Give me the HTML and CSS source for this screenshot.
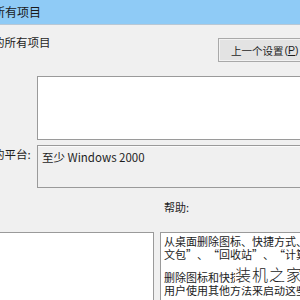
FILE: index.html
```html
<!DOCTYPE html>
<html lang="zh-Hans">
<head>
<meta charset="utf-8">
<link rel="stylesheet" href="styles.css">
</head>
<body>
<div class="window">
  <div class="titlebar"><span class="title-text">所有项目</span></div>
  <div class="main">
    <div class="row-top">
      <div class="label cut">的所有项目</div>
      <div class="button">上一个设置<span class="accel">(<u>P</u>)</span></div>
    </div>
    <div class="comment-box"></div>
    <div class="row-platform">
      <div class="label cut label-platform">的平台:</div>
      <div class="platform-box">至少 Windows 2000</div>
    </div>
    <div class="help-label">帮助:</div>
    <div class="row-bottom">
      <div class="options-box"></div>
      <div class="help-box">
        <div class="line">从桌面删除图标、快捷方式、和其他默认的以及用户定义的项目，包括<span class="ql">“</span>公</div>
        <div class="line">文包<span class="qr">”</span>、<span class="ql">“</span>回收站<span class="qr">”</span>、<span class="ql">“</span>计算机<span class="qr">”</span>和<span class="ql">“</span>网络位置<span class="qr">”</span>。</div>
        <div class="line blank"></div>
        <div class="line">删除图标和快捷方式不会阻止用户使用其他方法来启动</div>
        <div class="line">用户使用其他方法来启动这些程序或打开这些项目。</div>
        <div class="watermark">装机之家</div>
      </div>
    </div>
  </div>
</div>
</body>
</html>
```
FILE: styles.css
```css
html, body {
  margin: 0;
  padding: 0;
  width: 300px;
  height: 300px;
  overflow: hidden;
  background: #f0f0f0;
}
.window {
  width: 300px;
  height: 300px;
  overflow: hidden;
  font-family: "Noto Sans CJK SC", "Liberation Sans", sans-serif;
  font-size: 11px;
  color: #1e1e1e;
}
.titlebar {
  height: 24px;
  background: #8fcbf6;
  border-bottom: 1px solid #b8c8d6;
  display: flex;
  align-items: center;
  overflow: hidden;
}
.title-text {
  font-size: 12px;
  line-height: 14px;
  margin-left: -7px;
  white-space: nowrap;
  color: #1a1a1a;
}
.main {
  padding-top: 11px;
  background: #f0f0f0;
}
.row-top {
  display: flex;
  align-items: flex-start;
  justify-content: space-between;
  height: 26px;
}
.label {
  line-height: 12px;
  white-space: nowrap;
  font-size: 11.5px;
}
.cut {
  margin-left: -7px;
}
.button {
  margin-top: 2px;
  height: 22px;
  width: 80px;
  margin-right: -12px;
  border: 1px solid #a9a9a9;
  background: #e3e3e3;
  box-shadow: inset 0 0 0 1px #f2f2f2;
  display: flex;
  align-items: center;
  padding-left: 12px;
  box-sizing: content-box;
  white-space: nowrap;
  font-size: 10.5px;
}
.accel {
  font-family: "Liberation Sans", sans-serif;
  font-size: 10.5px;
  margin-left: 1px;
}
.button u {
  text-underline-offset: 1px;
}
.comment-box {
  margin-top: 14px;
  margin-left: 37px;
  height: 62px;
  background: #ffffff;
  border: 1px solid #9a9a9a;
  border-right: none;
}
.row-platform {
  display: flex;
  align-items: flex-start;
  margin-top: 5px;
}
.label-platform {
  margin-top: 3px;
  width: 44px;
  flex: none;
}
.platform-box {
  flex: 1;
  height: 36px;
  border: 1px solid #9a9a9a;
  border-right: none;
  box-shadow: inset 0 1px 0 #fbfbfb;
  padding-top: 5px;
  padding-left: 4px;
  line-height: 12px;
  font-size: 11.5px;
  white-space: nowrap;
}
.help-label {
  margin-top: 13px;
  margin-left: 164px;
  line-height: 12px;
}
.row-bottom {
  margin-top: 19px;
  display: flex;
  gap: 6px;
  height: 80px;
}
.options-box {
  width: 154px;
  flex: none;
  background: #ffffff;
  border-top: 1px solid #9a9a9a;
  border-right: 1px solid #9a9a9a;
  box-sizing: border-box;
}
.help-box {
  position: relative;
  flex: 1;
  background: #ffffff;
  border-top: 1px solid #9a9a9a;
  border-left: 1px solid #9a9a9a;
  padding: 2px 0 0 3px;
  overflow: hidden;
}
.line {
  line-height: 13px;
  height: 13px;
  white-space: nowrap;
  font-size: 11px;
  color: #222;
}
.line.blank {
  height: 10px;
}
.ql, .qr {
  display: inline-block;
  width: 11px;
}
.ql {
  text-align: right;
}
.qr {
  text-align: left;
}
.watermark {
  position: absolute;
  left: 74px;
  top: 29px;
  width: 80px;
  height: 24px;
  background: #ffffff;
  font-size: 16px;
  line-height: 24px;
  font-weight: 300;
  letter-spacing: 1px;
  color: #222;
  white-space: nowrap;
}
```
